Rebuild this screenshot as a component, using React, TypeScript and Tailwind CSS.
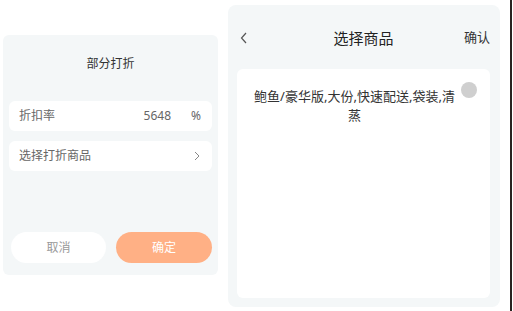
export default function App() {
  return (
    <div className="flex h-[311px] w-[513px] items-start bg-white pl-[3px] font-['Noto_Sans','Noto_Sans_CJK_SC',sans-serif]">
      {/* 部分打折 */}
      <div className="mt-[35px] flex h-[240px] w-[215px] flex-col rounded-[6px] bg-[#f4f7f8] px-[6px]">
        <div className="pt-[20px] text-center text-[12px] leading-[17px] text-[#333]">部分打折</div>
        <div className="mt-[29px] flex h-[30px] items-center rounded-[6px] bg-white pl-[10px] pr-[11px] text-[12px] text-[#666]">
          <span className="flex-1">折扣率</span>
          <span className="mr-[20px]">5648</span>
          <span>%</span>
        </div>
        <div className="mt-[10px] flex h-[30px] items-center rounded-[6px] bg-white pl-[10px] pr-[12px] text-[12px] text-[#666]">
          <span className="flex-1">选择打折商品</span>
          <svg width="6" height="10" viewBox="0 0 6 10" fill="none">
            <path d="M1 1l4 4-4 4" stroke="#888" strokeWidth="1" />
          </svg>
        </div>
        <div className="mt-[61px] flex justify-between pl-[2px] pr-0">
          <button className="h-[31px] w-[95px] rounded-full bg-white text-[12px] text-[#999]">取消</button>
          <button className="h-[31px] w-[96px] rounded-full bg-[#ffb085] text-[12px] text-white">确定</button>
        </div>
      </div>

      {/* 选择商品 */}
      <div className="ml-[10px] mt-[5px] flex h-[302px] w-[272px] flex-col rounded-[8px] bg-[#f4f7f8] pb-[9px] pl-[9px] pr-[10px] pt-[14px]">
        <div className="relative flex h-[38px] items-center justify-between pl-[3px] pr-0">
          <svg width="8" height="12" viewBox="0 0 8 12" fill="none">
            <path d="M6 1L1.5 6 6 11" stroke="#555" strokeWidth="1.2" />
          </svg>
          <span className="absolute left-1/2 -translate-x-1/2 text-[15px] text-[#222]">选择商品</span>
          <span className="text-[13px] text-[#333]">确认</span>
        </div>
        <div className="relative mt-[12px] flex-1 rounded-[6px] bg-white pl-[12px] pr-[30px] pt-[18px]">
          <p className="text-center text-[13px] leading-[18.5px] text-[#333]">鲍鱼/豪华版,大份,快速配送,袋装,清蒸</p>
          <span className="absolute right-[13px] top-[13px] h-[16px] w-[16px] rounded-full bg-[#cfcfcf]" />
        </div>
      </div>

      <div className="ml-[10px] h-full w-[2px] bg-[#2a2220]" />
    </div>
  )
}
